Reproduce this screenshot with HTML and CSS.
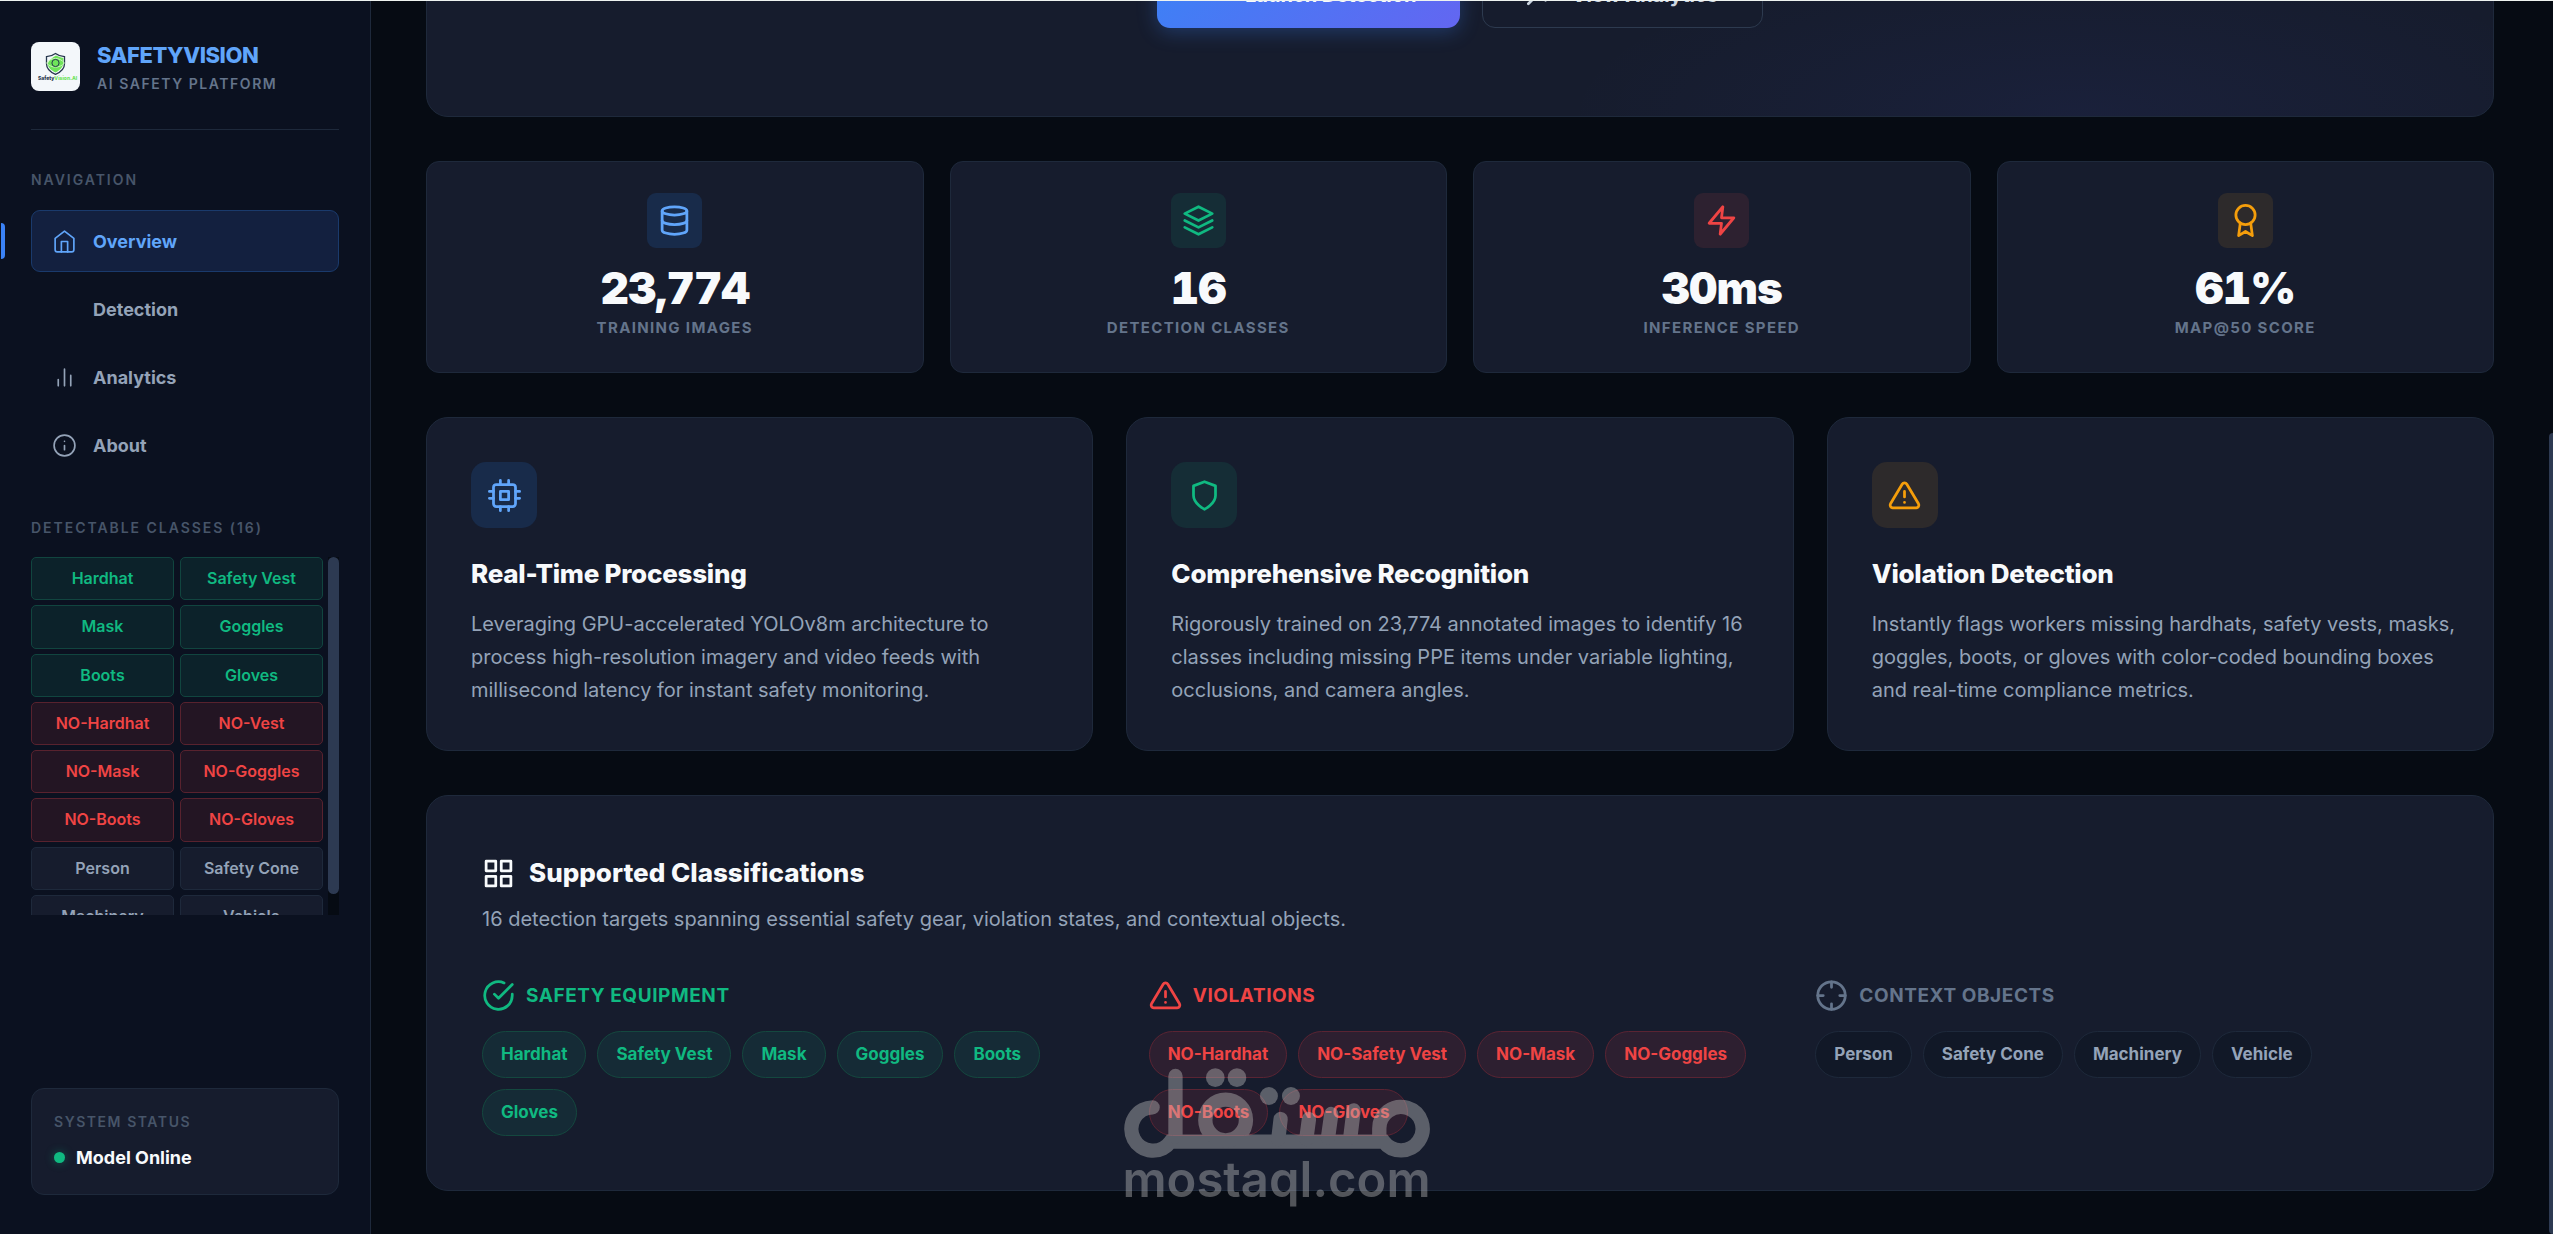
FILE: index.html
```html
<!DOCTYPE html>
<html lang="en">
<head>
<meta charset="utf-8">
<meta name="viewport" content="width=device-width, initial-scale=1">
<title>SafetyVision</title>
<link rel="stylesheet" href="styles.css">
</head>
<body>
<div class="app">
  <aside class="sidebar">
    <header class="brand">
      <svg class="brand-logo" viewBox="0 0 49 49" aria-hidden="true">
        <rect width="49" height="49" rx="8" fill="#f3f7fa"/>
        <path d="M24.500 11.500c3 2.200 6 3 9 3.200v7c0 5-4 8.500-9 10.600-5-2.100-9-5.600-9-10.600v-7c3-.2 6-1 9-3.200z" fill="#f3f7fa" stroke="#26364d" stroke-width="1.300"/>
        <path d="M25 13.500c2.500 1.300 4.500 2 7.300 2.400v5.600c-.3 4-3.800 7-7.800 9-4-2-7.500-4.600-7.800-9 1.500-3.500 4-5.500 8.300-8z" fill="#6fe45a"/>
        <path d="M15.500 21c5-6 13-6 18 0-5 5.500-13 5.500-18 0z" fill="none" stroke="#c9f7b8" stroke-width="1"/>
        <circle cx="24.500" cy="21" r="3.600" fill="#6fe45a" stroke="#26364d" stroke-width="1"/>
        <text class="brand-mark" x="7" y="38"><tspan fill="#26364d">Safety</tspan><tspan fill="#6fe45a">Vision.AI</tspan></text>
      </svg>
      <div>
        <div class="brand-name">SAFETYVISION</div>
        <div class="brand-sub">AI SAFETY PLATFORM</div>
      </div>
    </header>

    <h2 class="side-label">NAVIGATION</h2>
    <nav class="nav">
      <a class="nav-item active" href="#overview">
        <svg class="icon" viewBox="0 0 24 24"><path d="M3 9l9-7 9 7v11a2 2 0 0 1-2 2H5a2 2 0 0 1-2-2z"/><path d="M9 22V12h6v10"/></svg>
        Overview
      </a>
      <a class="nav-item" href="#detection">
        <svg class="icon" viewBox="0 0 24 24"></svg>
        Detection
      </a>
      <a class="nav-item" href="#analytics">
        <svg class="icon" viewBox="0 0 24 24"><path d="M18 20V10M12 20V4M6 20v-6"/></svg>
        Analytics
      </a>
      <a class="nav-item" href="#about">
        <svg class="icon" viewBox="0 0 24 24"><circle cx="12" cy="12" r="10"/><path d="M12 16v-4M12 8h.01"/></svg>
        About
      </a>
    </nav>

    <h2 class="side-label classes-label">DETECTABLE CLASSES (16)</h2>
    <div class="class-scroll">
      <ul class="class-grid">
        <li class="green">Hardhat</li><li class="green">Safety Vest</li>
        <li class="green">Mask</li><li class="green">Goggles</li>
        <li class="green">Boots</li><li class="green">Gloves</li>
        <li class="red">NO-Hardhat</li><li class="red">NO-Vest</li>
        <li class="red">NO-Mask</li><li class="red">NO-Goggles</li>
        <li class="red">NO-Boots</li><li class="red">NO-Gloves</li>
        <li>Person</li><li>Safety Cone</li>
        <li>Machinery</li><li>Vehicle</li>
      </ul>
      <div class="list-track"><div class="list-thumb"></div></div>
    </div>

    <section class="status">
      <h2 class="status-label">SYSTEM STATUS</h2>
      <p class="status-value"><span class="status-dot"></span>Model Online</p>
    </section>
  </aside>

  <main class="main">
    <section class="hero">
      <button class="btn btn-primary" type="button">
        <svg class="btn-icon" viewBox="0 0 24 24"></svg>
        Launch Detection
      </button>
      <button class="btn btn-outline" type="button">
        <svg class="btn-icon" viewBox="0 0 24 24"><path d="M23 6l-9.500 9.500-5-5L1 18"/><path d="M17 6h6v6"/></svg>
        View Analytics
      </button>
    </section>

    <section class="stats">
      <article class="stat">
        <span class="tile blue"><svg class="icon" viewBox="0 0 24 24"><ellipse cx="12" cy="5" rx="9" ry="3"/><path d="M21 12c0 1.660-4 3-9 3s-9-1.340-9-3"/><path d="M3 5v14c0 1.660 4 3 9 3s9-1.340 9-3V5"/></svg></span>
        <strong class="stat-value">23,774</strong>
        <span class="stat-label">TRAINING IMAGES</span>
      </article>
      <article class="stat">
        <span class="tile green"><svg class="icon" viewBox="0 0 24 24"><path d="M12 2L2 7l10 5 10-5-10-5z"/><path d="M2 17l10 5 10-5"/><path d="M2 12l10 5 10-5"/></svg></span>
        <strong class="stat-value">16</strong>
        <span class="stat-label">DETECTION CLASSES</span>
      </article>
      <article class="stat">
        <span class="tile red"><svg class="icon" viewBox="0 0 24 24"><path d="M13 2L3 14h9l-1 8 10-12h-9l1-8z"/></svg></span>
        <strong class="stat-value">30ms</strong>
        <span class="stat-label">INFERENCE SPEED</span>
      </article>
      <article class="stat">
        <span class="tile amber"><svg class="icon" viewBox="0 0 24 24"><circle cx="12" cy="8" r="7"/><path d="M8.210 13.890L7 23l5-3 5 3-1.210-9.120"/></svg></span>
        <strong class="stat-value">61%</strong>
        <span class="stat-label">MAP@50 SCORE</span>
      </article>
    </section>

    <section class="features">
      <article class="feature">
        <span class="tile blue"><svg class="icon" viewBox="0 0 24 24"><rect x="4" y="4" width="16" height="16" rx="2"/><rect x="9" y="9" width="6" height="6"/><path d="M9 1v3M15 1v3M9 20v3M15 20v3M20 9h3M20 14h3M1 9h3M1 14h3"/></svg></span>
        <h3>Real-Time Processing</h3>
        <p>Leveraging GPU-accelerated YOLOv8m architecture to process high-resolution imagery and video feeds with millisecond latency for instant safety monitoring.</p>
      </article>
      <article class="feature">
        <span class="tile green"><svg class="icon" viewBox="0 0 24 24"><path d="M12 22s8-4 8-10V5l-8-3-8 3v7c0 6 8 10 8 10z"/></svg></span>
        <h3>Comprehensive Recognition</h3>
        <p>Rigorously trained on 23,774 annotated images to identify 16 classes including missing PPE items under variable lighting, occlusions, and camera angles.</p>
      </article>
      <article class="feature">
        <span class="tile amber"><svg class="icon" viewBox="0 0 24 24"><path d="M10.290 3.860L1.820 18a2 2 0 0 0 1.710 3h16.940a2 2 0 0 0 1.710-3L13.710 3.860a2 2 0 0 0-3.420 0z"/><path d="M12 9v4M12 17h.01"/></svg></span>
        <h3>Violation Detection</h3>
        <p>Instantly flags workers missing hardhats, safety vests, masks, goggles, boots, or gloves with color-coded bounding boxes and real-time compliance metrics.</p>
      </article>
    </section>

    <section class="classes">
      <h2 class="classes-title">
        <svg class="icon" viewBox="0 0 24 24"><path d="M3 3h7v7H3zM14 3h7v7h-7zM14 14h7v7h-7zM3 14h7v7H3z"/></svg>
        Supported Classifications
      </h2>
      <p class="classes-sub">16 detection targets spanning essential safety gear, violation states, and contextual objects.</p>
      <div class="groups">
        <div class="group">
          <h3 class="green"><svg class="icon" viewBox="0 0 24 24"><path d="M22 11.080V12a10 10 0 1 1-5.930-9.140"/><path d="M22 4L12 14.010l-3-3"/></svg>SAFETY EQUIPMENT</h3>
          <ul class="pills green">
            <li>Hardhat</li><li>Safety Vest</li><li>Mask</li><li>Goggles</li><li>Boots</li><li>Gloves</li>
          </ul>
        </div>
        <div class="group">
          <h3 class="red"><svg class="icon" viewBox="0 0 24 24"><path d="M10.290 3.860L1.820 18a2 2 0 0 0 1.710 3h16.940a2 2 0 0 0 1.710-3L13.710 3.860a2 2 0 0 0-3.420 0z"/><path d="M12 9v4M12 17h.01"/></svg>VIOLATIONS</h3>
          <ul class="pills red">
            <li>NO-Hardhat</li><li>NO-Safety Vest</li><li>NO-Mask</li><li>NO-Goggles</li><li>NO-Boots</li><li>NO-Gloves</li>
          </ul>
        </div>
        <div class="group">
          <h3><svg class="icon" viewBox="0 0 24 24"><circle cx="12" cy="12" r="10"/><path d="M22 12h-4M6 12H2M12 6V2M12 22v-4"/></svg>CONTEXT OBJECTS</h3>
          <ul class="pills">
            <li>Person</li><li>Safety Cone</li><li>Machinery</li><li>Vehicle</li>
          </ul>
        </div>
      </div>
    </section>
  </main>

  <div class="page-track"><div class="page-thumb"></div></div>
</div>

<div class="watermark">
  <svg class="watermark-logo" viewBox="36 84 924 270" aria-hidden="true">
    <g fill="none" stroke="#bcbcbc" stroke-width="43" stroke-linecap="round">
      <path d="M125 202a65 65 0 1 0 54 103H818a65 65 0 1 0-13-38V300"/>
      <path d="M193.500 108V290"/>
      <circle cx="344" cy="240" r="61"/>
      <path d="M509 237l-7 60M594 237l-8 60M661 222l-10 72M728 211l-10 82"/>
    </g>
    <g fill="#bcbcbc">
      <circle cx="313" cy="113" r="28"/><circle cx="378" cy="113" r="28"/>
      <circle cx="474" cy="168" r="27"/><circle cx="540" cy="168" r="27"/>
    </g>
  </svg>
  <span class="watermark-text">mostaql.com</span>
</div>
</body>
</html>
```
FILE: styles.css
```css
* {
  box-sizing: border-box;
  margin: 0;
  padding: 0;
}

body {
  height: 100vh;
  overflow: hidden;
  border-top: 1px solid #eef3f0;
  background: #060b13;
  color: #f8fafc;
  font-family: Inter, "Liberation Sans", sans-serif;
}

ul {
  list-style: none;
}

.icon,
.btn-icon {
  flex: none;
  fill: none;
  stroke: currentColor;
  stroke-width: 2;
  stroke-linecap: round;
  stroke-linejoin: round;
}

.app {
  display: grid;
  grid-template-columns: 371px minmax(0, 1fr) 4px;
  height: 100%;
}

/* Sidebar */

.sidebar {
  display: flex;
  flex-direction: column;
  min-height: 0;
  padding: 41px 31px 39px;
  border-right: 1px solid #1e293b;
  background: #0b1120;
}

.brand {
  display: flex;
  align-items: flex-start;
  gap: 17px;
  padding-bottom: 34px;
  border-bottom: 1px solid #1e293b;
}

.brand-logo {
  width: 49px;
  height: 49px;
}

.brand-mark {
  font-size: 5px;
  font-weight: 800;
}

.brand-name {
  margin-bottom: 4px;
  color: #60a5fa;
  font-size: 22px;
  font-weight: 800;
  line-height: 27px;
  letter-spacing: -0.02em;
}

.brand-sub {
  color: #64748b;
  font-size: 14px;
  font-weight: 600;
  line-height: 22px;
  letter-spacing: 0.11em;
}

.side-label,
.status-label {
  color: #475569;
  font-size: 14px;
  font-weight: 600;
  line-height: 22px;
  letter-spacing: 0.14em;
}

.side-label {
  margin: 39px 0 19px;
}

.classes-label {
  margin: 41px 0 18px;
}

.status-label {
  letter-spacing: 0.11em;
}

.nav {
  display: flex;
  flex-direction: column;
  gap: 6px;
}

.nav-item {
  position: relative;
  display: flex;
  align-items: center;
  gap: 16px;
  height: 62px;
  padding: 0 20px;
  border: 1px solid transparent;
  border-radius: 9px;
  color: #94a3b8;
  font-size: 18px;
  font-weight: 700;
  text-decoration: none;
}

.nav-item .icon {
  width: 25px;
  height: 25px;
  stroke-width: 1.6;
}

.nav-item.active {
  border-color: #1a3a6c;
  background: #13203f;
  color: #60a5fa;
}

.nav-item.active::before {
  content: "";
  position: absolute;
  top: 12px;
  left: -31px;
  width: 4px;
  height: 36px;
  border-radius: 0 4px 4px 0;
  background: #3b82f6;
}

.class-scroll {
  display: flex;
  justify-content: space-between;
  height: 358px;
  overflow: hidden;
}

.class-grid {
  display: grid;
  grid-template-columns: 1fr 1fr;
  grid-auto-rows: 1fr;
  gap: 5px 6px;
  width: 292px;
  height: 381px;
}

.class-grid li {
  display: flex;
  align-items: center;
  justify-content: center;
  padding-bottom: 1px;
  border: 1px solid #1e293b;
  border-radius: 5px;
  background: #161c2d;
  color: #94a3b8;
  font-size: 16px;
  font-weight: 600;
}

.class-grid .green {
  border-color: #11453f;
  background: #0c222a;
  color: #10b981;
}

.class-grid .red {
  border-color: #58222e;
  background: #231523;
  color: #ef4444;
}

.list-track {
  width: 11px;
  background: #060b13;
}

.list-thumb {
  height: 94%;
  border-radius: 6px;
  background: #2d3a52;
}

.status {
  margin-top: auto;
  padding: 22px;
  border: 1px solid #1e293b;
  border-radius: 13px;
  background: #161c2d;
}

.status-value {
  display: flex;
  align-items: center;
  gap: 11px;
  margin-top: 10px;
  font-size: 18px;
  font-weight: 700;
  line-height: 29px;
}

.status-dot {
  width: 11px;
  height: 11px;
  border-radius: 50%;
  background: #10b981;
  box-shadow: 0 0 10px rgba(16, 185, 129, 0.4);
}

/* Main column, shown scrolled to its end */

.main {
  display: flex;
  flex-direction: column;
  justify-content: flex-end;
  gap: 44px;
  min-height: 0;
  padding: 0 55px 43px;
  overflow: hidden;
}

.hero,
.stat,
.feature,
.classes {
  flex: none;
  border: 1px solid #1e293b;
  background: #161c2d;
}

.hero {
  display: flex;
  justify-content: center;
  gap: 22px;
  padding: 300px 88px 88px;
  border-radius: 22px;
  background: radial-gradient(ellipse 25% 36% at 80% 100%, rgba(79, 92, 241, 0.07), transparent), #161c2d;
}

.btn {
  display: flex;
  align-items: center;
  gap: 11px;
  height: 66px;
  padding: 0 44px;
  border: 1px solid transparent;
  border-radius: 13px;
  font-family: inherit;
  font-size: 20px;
  font-weight: 700;
}

.btn-icon {
  width: 33px;
  height: 33px;
}

.btn-primary {
  border: 0;
  background: linear-gradient(135deg, #3b82f6, #6366f1);
  color: #f8fafc;
  box-shadow: 0 4px 20px rgba(59, 130, 246, 0.3);
}

.btn-outline {
  border-color: #2d3a4f;
  background: #161c2d;
  color: #cbd5e1;
}

.tile {
  display: grid;
  place-items: center;
}

.tile.blue {
  background: #182b4a;
  color: #60a5fa;
}

.tile.green {
  background: #152d36;
  color: #10b981;
}

.tile.red {
  background: #2d2130;
  color: #ef4444;
}

.tile.amber {
  background: #2d2a2b;
  color: #f59e0b;
}

.stats {
  flex: none;
  display: grid;
  grid-template-columns: repeat(4, 1fr);
  gap: 26px;
}

.stat {
  display: flex;
  flex-direction: column;
  align-items: center;
  padding: 31px;
  border-radius: 13px;
}

.stat .tile {
  width: 55px;
  height: 55px;
  border-radius: 9px;
}

.stat .icon,
.classes .icon,
.feature .icon {
  width: 33px;
  height: 33px;
}

.stat-value {
  margin: 18px 0 5px;
  font-size: 44px;
  font-weight: 900;
  font-variant-numeric: tabular-nums;
  line-height: 44px;
  letter-spacing: -0.02em;
}

.stat-label {
  color: #64748b;
  font-size: 15px;
  font-weight: 700;
  line-height: 26px;
  letter-spacing: 0.09em;
}

.features {
  flex: none;
  display: grid;
  grid-template-columns: repeat(3, 1fr);
  gap: 33px;
}

.feature {
  padding: 44px 36px 43px 44px;
  border-radius: 22px;
}

.feature .tile {
  width: 66px;
  height: 66px;
  border-radius: 15px;
}

.feature h3 {
  margin: 30px 0 18px;
  font-size: 26px;
  font-weight: 800;
  line-height: 32px;
  letter-spacing: -0.01em;
}

.feature p,
.classes-sub {
  color: #94a3b8;
  font-size: 20px;
  line-height: 33px;
}

.classes {
  padding: 56px 55px 54px;
  border-radius: 22px;
}

.classes-title {
  display: flex;
  align-items: center;
  gap: 14px;
  font-size: 26px;
  font-weight: 800;
  line-height: 42px;
}

.classes-sub {
  margin: 9px 0 43px;
}

.groups {
  display: grid;
  grid-template-columns: repeat(3, 1fr);
  gap: 44px;
}

.group h3 {
  display: flex;
  align-items: center;
  gap: 11px;
  margin-bottom: 19px;
  color: #64748b;
  font-size: 19px;
  font-weight: 700;
  line-height: 33px;
  letter-spacing: 0.03em;
}

.group h3.green {
  color: #10b981;
}

.group h3.red {
  color: #ef4444;
}

.pills {
  display: flex;
  flex-wrap: wrap;
  gap: 11px;
}

.pills li {
  padding: 0 18px;
  border: 1px solid #1e293b;
  border-radius: 24px;
  background: #111827;
  color: #94a3b8;
  font-size: 17px;
  font-weight: 700;
  line-height: 45px;
}

.pills.green li {
  border-color: #14483f;
  background: #152b36;
  color: #10b981;
}

.pills.red li {
  border-color: #5a2433;
  background: #2d1f30;
  color: #ef4444;
}

.page-track {
  display: flex;
  align-items: flex-end;
}

.page-thumb {
  width: 4px;
  height: 65%;
  border-radius: 4px 0 0 4px;
  background: #2d3a52;
}

/* Watermark over the page */

.watermark {
  position: fixed;
  bottom: 32px;
  left: 50%;
  display: flex;
  flex-direction: column;
  align-items: center;
  transform: translateX(-50%);
  opacity: 0.42;
  color: #bcbcbc;
  pointer-events: none;
}

.watermark-logo {
  width: 308px;
  height: 90px;
}

.watermark-text {
  font-size: 49px;
  font-weight: 600;
  line-height: 44px;
}
```
